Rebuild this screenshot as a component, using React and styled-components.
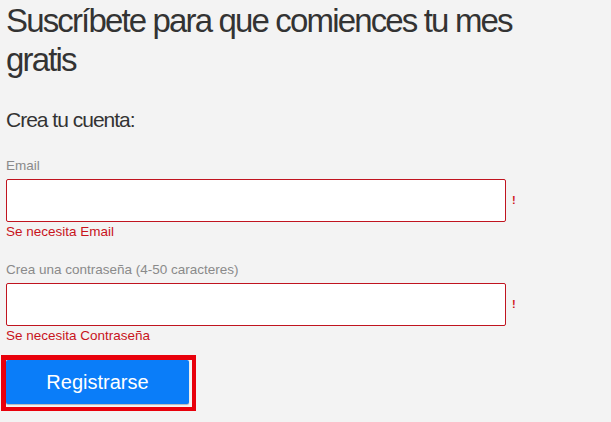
import React from 'react';
import styled, { createGlobalStyle } from 'styled-components';

const GlobalStyle = createGlobalStyle`
  html, body {
    margin: 0;
    padding: 0;
    background: #f3f3f3;
  }
  body {
    font-family: "Liberation Sans", Arial, Helvetica, sans-serif;
    color: #333;
  }
`;

const fields = [
  { id: 'email', label: 'Email', type: 'email', error: 'Se necesita Email' },
  {
    id: 'password',
    label: 'Crea una contraseña (4-50 caracteres)',
    type: 'password',
    error: 'Se necesita Contraseña',
  },
];

const App = () => {
  return (
    <Page>
      <GlobalStyle />
      <Title>Suscríbete para que comiences tu mes gratis</Title>
      <SubTitle>Crea tu cuenta:</SubTitle>
      <Form onSubmit={(e) => e.preventDefault()}>
        <FieldList>
          {fields.map((field) => (
            <Field key={field.id}>
              <Label htmlFor={field.id}>{field.label}</Label>
              <InputRow>
                <Input id={field.id} type={field.type} invalid />
                <Bang>!</Bang>
              </InputRow>
              <ErrorText>{field.error}</ErrorText>
            </Field>
          ))}
        </FieldList>
        <Highlight>
          <SubmitButton type="submit">Registrarse</SubmitButton>
        </Highlight>
      </Form>
    </Page>
  );
};

export default App;

const Page = styled.div`
  padding: 0 6px;
`;

const Title = styled.h1`
  margin: 0;
  padding-top: 1px;
  width: 540px;
  font-size: 33px;
  line-height: 39px;
  font-weight: 400;
  color: #333;
  letter-spacing: -1.85px;
`;

const SubTitle = styled.h2`
  margin: 29px 0 0;
  font-size: 21px;
  line-height: 24px;
  font-weight: 400;
  color: #333;
  letter-spacing: -1px;
`;

const Form = styled.form`
  display: flex;
  flex-direction: column;
  align-items: flex-start;
  margin-top: 26px;
`;

const FieldList = styled.div`
  display: flex;
  flex-direction: column;
  gap: 22px;
`;

const Field = styled.div`
  display: flex;
  flex-direction: column;
`;

const Label = styled.label`
  font-size: 13.5px;
  line-height: 16px;
  color: #8a8a8a;
  margin-bottom: 5px;
`;

const InputRow = styled.div`
  display: flex;
  align-items: center;
  gap: 6px;
`;

const Input = styled.input`
  box-sizing: border-box;
  width: 500px;
  height: 43px;
  margin: 0;
  padding: 0 10px;
  background: #fff;
  border: 1px solid ${(props) => (props.invalid ? '#c0141f' : '#ccc')};
  border-radius: 2px;
  font-family: inherit;
  font-size: 16px;
  outline: none;
`;

const Bang = styled.span`
  font-size: 11px;
  font-weight: 700;
  color: #d0141c;
  line-height: 1;
`;

const ErrorText = styled.div`
  margin-top: 2px;
  font-size: 13.5px;
  line-height: 16px;
  color: #c8141c;
`;

const Highlight = styled.div`
  display: inline-flex;
  margin: 11px 0 0 -5px;
  padding: 0 3px 3px 0;
  border: 4px solid #e8000b;
  border-left-width: 5px;
  border-top-width: 5px;
`;

const SubmitButton = styled.button`
  width: 183px;
  height: 44px;
  border: none;
  border-radius: 2px;
  background: #0a7df9;
  box-shadow: 0 1px 1px rgba(0, 0, 0, 0.25);
  color: #fff;
  font-family: inherit;
  font-size: 20px;
  cursor: pointer;
`;
